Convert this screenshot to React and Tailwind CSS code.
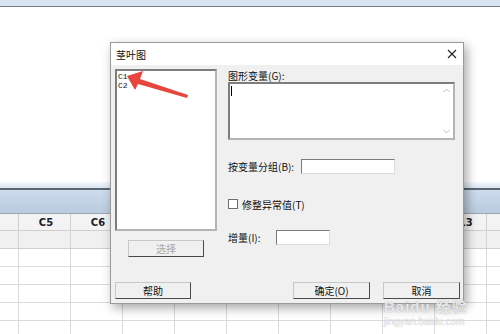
import React from "react";

const cols = ["C5", "C6", "C7", "C8", "C9", "C10", "C11", "C12", "C13"];
const headCols = { C5: true, C6: true, C13: true };

const cjk = { fontFamily: '"Noto Sans CJK SC", "Noto Sans", sans-serif' };

function WinButton({ children, className = "", disabled = false }) {
  return (
    <div
      className={`flex items-center justify-center h-[17px] bg-[#f0f0f0] border border-[#c8c8c8] border-r-[#4a4a4a] border-b-[#4a4a4a] text-[10px] leading-none ${
        disabled ? "text-[#a8a8a8]" : "text-[#111]"
      } ${className}`}
      style={cjk}
    >
      {children}
    </div>
  );
}

function Sheet() {
  const rows = [0, 1, 2, 3, 4];
  return (
    <div className="flex flex-col">
      <div className="h-[7px] bg-[#d9e4f1] border-b border-[#6f7a87]" />
      <div className="h-[175px] bg-white" />
      <div className="h-[8px] bg-gradient-to-b from-[#f3f7fb] to-[#d9e5f2] border-b-2 border-[#5b6672]" />
      <div className="h-[24px] bg-gradient-to-b from-[#cddcec] to-[#b9cbdf] border-b border-[#9aa6b2]" />
      <div className="grid grid-cols-[19px_repeat(9,52px)_1fr] h-[17px] bg-[#f3f3f3] border-b border-[#cfcfcf]">
        <div className="border-r border-[#cfcfcf]" />
        {cols.map((c) => (
          <div
            key={c}
            className="border-r border-[#cfcfcf] flex items-center justify-center pl-[3px] text-[10px] font-bold text-[#1b1b2a]"
            style={{ fontFamily: '"DejaVu Sans", sans-serif' }}
          >
            {headCols[c] ? c : ""}
          </div>
        ))}
        <div />
      </div>
      <div className="grid grid-cols-[19px_repeat(9,52px)_1fr] h-[18px] bg-[#f0f0f0] border-b border-[#cfcfcf]">
        <div className="border-r border-[#d6d6d6]" />
        {cols.map((c) => (
          <div key={c} className="border-r border-[#d6d6d6]" />
        ))}
        <div />
      </div>
      {rows.map((r) => (
        <div
          key={r}
          className="grid grid-cols-[19px_repeat(9,52px)_1fr] h-[18px] bg-white border-b border-[#dadada]"
        >
          <div className="border-r border-[#dadada]" />
          {cols.map((c) => (
            <div key={c} className="border-r border-[#dadada]" />
          ))}
          <div />
        </div>
      ))}
    </div>
  );
}

function Dialog() {
  return (
    <div className="absolute left-[110px] top-[42px] w-[354px] h-[262px] border border-[#9a9a9a] bg-[#f0f0f0] shadow-[3px_4px_10px_rgba(0,0,0,0.35)] flex flex-col">
      <div className="h-[22px] bg-white flex items-center justify-between pl-[5px] pr-[6px]">
        <span className="text-[10px] text-[#111]" style={cjk}>
          茎叶图
        </span>
        <svg width="10" height="10" viewBox="0 0 10 10">
          <path d="M1 1 L9 9 M9 1 L1 9" stroke="#222" strokeWidth="1.1" />
        </svg>
      </div>
      <div className="flex flex-col pl-[4px]">
        <div className="flex">
          <div className="flex flex-col w-[102px]">
            <div
              className="mt-[4px] h-[162px] bg-white border-2 border-[#b4b4b4] border-t-[#7d7d7d] border-l-[#7d7d7d] pl-[1px] pt-[1px] text-[8px] leading-[9px] text-[#111]"
              style={{ fontFamily: '"Liberation Mono", monospace' }}
            >
              <div>C1</div>
              <div>C2</div>
            </div>
            <WinButton disabled className="mt-[9px] ml-[13px] w-[76px]">
              选择
            </WinButton>
          </div>
          <div className="flex flex-col ml-[11px]">
            <div className="mt-[5px] h-[11px] text-[10px] leading-[11px] text-[#111]" style={cjk}>
              图形变量(G):
            </div>
            <div className="mt-[1px] w-[227px] h-[58px] bg-white border-2 border-[#b4b4b4] border-t-[#7d7d7d] border-l-[#7d7d7d] relative">
              <div className="absolute left-[1px] top-[2px] w-px h-[10px] bg-black" />
              <div className="absolute right-0 top-0 w-[14px] h-full flex flex-col justify-between items-center py-[4px]">
                <svg width="7" height="5" viewBox="0 0 7 5">
                  <path d="M0.5 4 L3.5 1 L6.5 4" fill="none" stroke="#bdbdbd" />
                </svg>
                <svg width="7" height="5" viewBox="0 0 7 5">
                  <path d="M0.5 1 L3.5 4 L6.5 1" fill="none" stroke="#bdbdbd" />
                </svg>
              </div>
            </div>
            <div className="mt-[19px] flex items-center h-[15px]">
              <div className="w-[73px] text-[10px] text-[#111]" style={cjk}>
                按变量分组(B):
              </div>
              <div className="w-[94px] h-[15px] bg-white border border-[#dcdcdc] border-t-[#7a7a7a] border-l-[#7a7a7a]" />
            </div>
            <div className="mt-[25px] flex items-center h-[10px]">
              <div className="w-[10px] h-[10px] bg-white border border-[#6e6e6e]" />
              <div className="ml-[4px] text-[10px] text-[#111]" style={cjk}>
                修整异常值(T)
              </div>
            </div>
            <div className="mt-[21px] flex items-center h-[15px]">
              <div className="w-[48px] text-[10px] text-[#111]" style={cjk}>
                增量(I):
              </div>
              <div className="w-[54px] h-[15px] bg-white border border-[#dcdcdc] border-t-[#7a7a7a] border-l-[#7a7a7a]" />
            </div>
          </div>
        </div>
        <div className="mt-[25px] flex">
          <WinButton className="w-[76px]">帮助</WinButton>
          <WinButton className="ml-[102px] w-[77px]">确定(O)</WinButton>
          <WinButton className="ml-[13px] w-[77px]">取消</WinButton>
        </div>
      </div>
    </div>
  );
}

export default function App() {
  return (
    <div className="relative w-[500px] h-[334px] overflow-hidden bg-white">
      <Sheet />
      <Dialog />
      <svg className="absolute left-0 top-0" width="500" height="334" viewBox="0 0 500 334">
        <polygon
          points="127,76 143,71 140,79 188,95 187,98 138,84 135,90"
          fill="#e8453c"
        />
      </svg>
      <div className="absolute left-[384px] top-[299px] flex flex-col items-start pointer-events-none">
        <div
          className="text-[15px] leading-[15px] font-bold tracking-[1px] text-white/75 [text-shadow:0_0_1px_#9a9a9a]"
          style={{ fontFamily: '"Liberation Sans", "Noto Sans CJK SC", sans-serif' }}
        >
          Baidu 经验
        </div>
        <div
          className="mt-[2px] text-[10px] leading-[11px] text-white/75 [text-shadow:0_0_1px_#aaaaaa]"
          style={{ fontFamily: '"Liberation Sans", sans-serif' }}
        >
          jingyan.baidu.com
        </div>
      </div>
    </div>
  );
}
